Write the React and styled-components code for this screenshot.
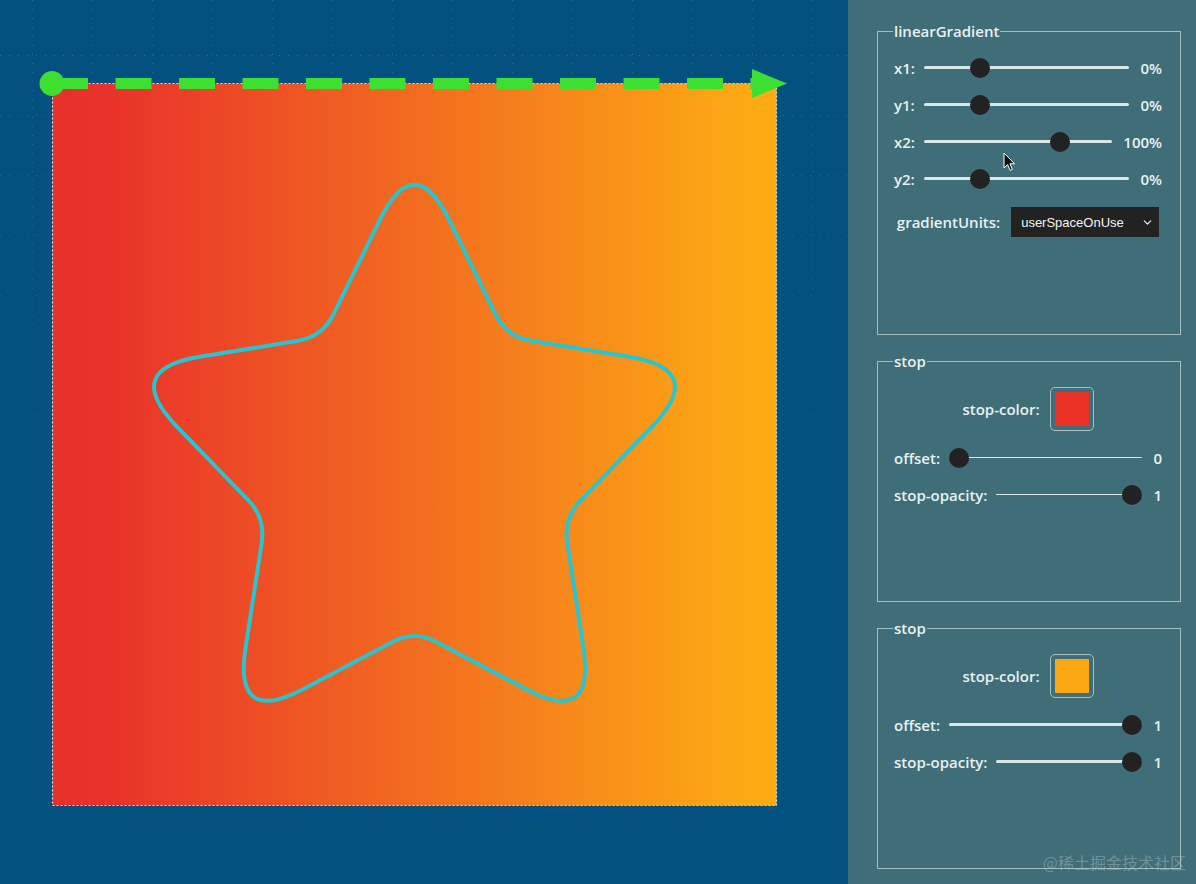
import React from "react";
import styled, { createGlobalStyle } from "styled-components";
import { ChevronDown } from "lucide-react";

const GlobalStyle = createGlobalStyle`
  html, body {
    margin: 0;
    padding: 0;
    background: #04507f;
  }
  body {
    font-family: "Open Sans", "Noto Sans", sans-serif;
  }
`;

const Page = styled.div`
  display: flex;
  width: 1196px;
  height: 884px;
  overflow: hidden;
`;

const Canvas = styled.div`
  flex: 0 0 848px;
  background: #04507f;
  svg {
    display: block;
  }
`;

const Panel = styled.aside`
  position: relative;
  flex: 1;
  display: flex;
  flex-direction: column;
  gap: 16px;
  box-sizing: border-box;
  padding: 21px 15px 0 29px;
  background: #3f6e78;
  color: #e9f1f1;
  font-weight: 600;
  font-size: 15px;
`;

const Fieldset = styled.fieldset`
  margin: 0;
  min-width: 0;
  box-sizing: border-box;
  height: ${(p) => p.$h}px;
  padding: 8px 18px 0 16px;
  border: 1px solid #a4bfc1;
  display: flex;
  flex-direction: column;
`;

const Legend = styled.legend`
  padding: 0 1px;
  margin-left: -1px;
  line-height: 20px;
  font-size: 15px;
`;

const Row = styled.div`
  display: flex;
  align-items: center;
  height: 37px;
  flex: none;
`;

const CenterRow = styled.div`
  display: flex;
  align-items: center;
  justify-content: center;
  gap: ${(p) => p.$gap || 10}px;
  height: ${(p) => p.$h || 44}px;
  margin-top: ${(p) => p.$mt || 0}px;
  margin-bottom: ${(p) => p.$mb || 0}px;
  flex: none;
`;

const Label = styled.span`
  margin-right: 9px;
  white-space: nowrap;
`;

const Value = styled.span`
  margin-left: 11px;
  white-space: nowrap;
`;

const Range = styled.input.attrs({ type: "range" })`
  -webkit-appearance: none;
  appearance: none;
  flex: 1;
  min-width: 0;
  height: 20px;
  margin: 0;
  background: transparent;

  &::-webkit-slider-runnable-track {
    height: ${(p) => (p.$thin ? 1.5 : 3)}px;
    background: #d8e6e6;
    border-radius: 2px;
  }
  &::-webkit-slider-thumb {
    -webkit-appearance: none;
    width: 20px;
    height: 20px;
    border-radius: 50%;
    border: none;
    background: #222;
    margin-top: ${(p) => (p.$thin ? -9.25 : -8.5)}px;
  }
`;

const SelectBox = styled.div`
  display: flex;
  align-items: center;
  justify-content: space-between;
  box-sizing: border-box;
  width: 148px;
  height: 30px;
  padding: 0 5px 0 10px;
  background: #222;
  color: #f4f4f4;
  font-family: "Liberation Sans", Arial, sans-serif;
  font-weight: 400;
  font-size: 13px;
`;

const Swatch = styled.div`
  box-sizing: border-box;
  width: 44px;
  height: 44px;
  padding: 4px;
  border: 1px solid #a8c0c2;
  border-radius: 5px;
  &::after {
    content: "";
    display: block;
    width: 100%;
    height: 100%;
    background: ${(p) => p.$color};
  }
`;

const Watermark = styled.div`
  position: absolute;
  right: 10px;
  bottom: 12px;
  font-family: "Noto Sans CJK SC", sans-serif;
  font-weight: 400;
  font-size: 16px;
  line-height: 20px;
  color: rgba(190, 205, 210, 0.4);
`;

const Cursor = styled.svg`
  position: absolute;
  left: 155px;
  top: 152px;
`;

// rounded star: outer radius R, inner radius r, scaled by sx/sy, corners cut by Lo/Li
function starPath(cx, cy, R, r, sx, sy, Lo, Li) {
  const pts = [];
  for (let i = 0; i < 10; i++) {
    const a = ((-90 + i * 36) * Math.PI) / 180;
    const rad = i % 2 === 0 ? R : r;
    pts.push([cx + rad * Math.cos(a) * sx, cy + rad * Math.sin(a) * sy]);
  }
  let d = "";
  pts.forEach((v, i) => {
    const prev = pts[(i + 9) % 10];
    const next = pts[(i + 1) % 10];
    const L = i % 2 === 0 ? Lo : Li;
    const cut = (p) => {
      const dx = p[0] - v[0];
      const dy = p[1] - v[1];
      const len = Math.hypot(dx, dy);
      return [v[0] + (dx * L) / len, v[1] + (dy * L) / len];
    };
    const a = cut(prev);
    const b = cut(next);
    d += `${i === 0 ? "M" : "L"}${a[0].toFixed(1)} ${a[1].toFixed(1)} Q${v[0].toFixed(1)} ${v[1].toFixed(1)} ${b[0].toFixed(1)} ${b[1].toFixed(1)} `;
  });
  return d + "Z";
}

const GREEN = "#3ddf30";

function Drawing() {
  const xs = [];
  for (let x = 32; x < 848; x += 60) xs.push(x);
  const ys = [];
  for (let y = 55; y < 884; y += 60) ys.push(y);

  return (
    <svg width="848" height="884" viewBox="0 0 848 884">
      <defs>
        <linearGradient id="fill" gradientUnits="userSpaceOnUse" x1="52" y1="0" x2="777" y2="0">
          <stop offset="0" stopColor="#e8302a" />
          <stop offset="0.08" stopColor="#e9322a" />
          <stop offset="0.95" stopColor="#fca914" />
          <stop offset="1" stopColor="#fdab12" />
        </linearGradient>
        <linearGradient id="fade" x1="0" y1="0" x2="0" y2="1">
          <stop offset="0" stopColor="#fff" stopOpacity="0.8" />
          <stop offset="0.35" stopColor="#fff" stopOpacity="0.45" />
          <stop offset="0.8" stopColor="#fff" stopOpacity="0" />
        </linearGradient>
        <mask id="gridMask">
          <rect x="0" y="0" width="848" height="884" fill="url(#fade)" />
        </mask>
      </defs>

      <g mask="url(#gridMask)" stroke="#3282a6" strokeWidth="1" strokeDasharray="1 8">
        {xs.map((x) => (
          <line key={"x" + x} x1={x + 0.5} y1="0" x2={x + 0.5} y2="884" />
        ))}
        {ys.map((y) => (
          <line key={"y" + y} x1="0" y1={y + 0.5} x2="848" y2={y + 0.5} />
        ))}
      </g>

      <rect
        x="52.5"
        y="83.5"
        width="724"
        height="722"
        fill="url(#fill)"
        stroke="#dcdcdc"
        strokeWidth="1.2"
        strokeDasharray="2 2"
      />

      <path
        d={starPath(414.5, 468, 312.5, 159, 0.985, 1.02, 79, 25)}
        fill="none"
        stroke="#28c5d0"
        strokeWidth="4"
        strokeLinejoin="round"
      />

      <line
        x1="52"
        y1="83.5"
        x2="752"
        y2="83.5"
        stroke={GREEN}
        strokeWidth="11"
        strokeDasharray="36 27.5"
      />
      <circle cx="52" cy="83.5" r="12.5" fill={GREEN} />
      <polygon points="752,69 787,83.5 752,98" fill={GREEN} />
    </svg>
  );
}

function SliderRow({ label, value, text, min, max, step, thin }) {
  return (
    <Row>
      <Label>{label}</Label>
      <Range min={min} max={max} step={step} defaultValue={value} $thin={thin} />
      <Value>{text}</Value>
    </Row>
  );
}

function StopPanel({ color, offset, opacity, h, thin }) {
  return (
    <Fieldset $h={h}>
      <Legend>stop</Legend>
      <CenterRow $mt={8} $mb={8}>
        <span>stop-color:</span>
        <Swatch $color={color} />
      </CenterRow>
      <SliderRow label="offset:" value={offset} text={String(offset)} min={0} max={1} step={0.01} thin={thin} />
      <SliderRow label="stop-opacity:" value={opacity} text={String(opacity)} min={0} max={1} step={0.01} thin={thin} />
    </Fieldset>
  );
}

export default function App() {
  return (
    <>
      <GlobalStyle />
      <Page>
        <Canvas>
          <Drawing />
        </Canvas>
        <Panel>
          <Fieldset $h={314}>
            <Legend>linearGradient</Legend>
            <SliderRow label="x1:" value={0} text="0%" min={-50} max={150} step={1} />
            <SliderRow label="y1:" value={0} text="0%" min={-50} max={150} step={1} />
            <SliderRow label="x2:" value={100} text="100%" min={-50} max={150} step={1} />
            <SliderRow label="y2:" value={0} text="0%" min={-50} max={150} step={1} />
            <CenterRow $h={30} $mt={10} $gap={11}>
              <span>gradientUnits:</span>
              <SelectBox>
                userSpaceOnUse
                <ChevronDown size={13} strokeWidth={2} />
              </SelectBox>
            </CenterRow>
          </Fieldset>
          <StopPanel color="#ea3226" offset={0} opacity={1} h={251} thin />
          <StopPanel color="#fca813" offset={1} opacity={1} h={251} />
          <Cursor width="13" height="20" viewBox="0 0 13 20">
            <path
              d="M1 1 L1 16 L4.6 12.6 L7.2 18.4 L9.4 17.4 L6.9 11.8 L11.6 11.8 Z"
              fill="#111"
              stroke="#fff"
              strokeWidth="1"
              strokeLinejoin="round"
            />
          </Cursor>
          <Watermark>@稀土掘金技术社区</Watermark>
        </Panel>
      </Page>
    </>
  );
}
